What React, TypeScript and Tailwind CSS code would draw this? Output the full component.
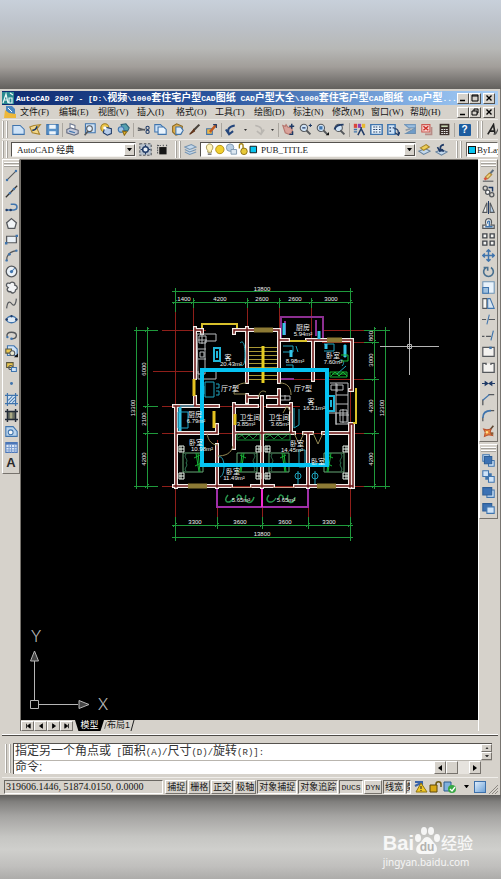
import type { ReactNode } from "react";

interface Tool {
  name: string;
  icon: ReactNode;
}

const BLUE = "#3f74ad";
const NAVY = "#1f3a66";
const PALE = "#cfe3f7";
const GRAY = "#55585c";
const GOLD = "#e8b830";

function Mixed({ text, latin }: { text: string; latin: string }) {
  const runs = text.match(/[\u3000-\u9fff]+|[^\u3000-\u9fff]+/g) ?? [];
  return (
    <>
      {runs.map((run, i) =>
        /[\u3000-\u9fff]/.test(run) ? (
          <span key={i}>{run}</span>
        ) : (
          <span key={i} className={latin}>
            {run}
          </span>
        )
      )}
    </>
  );
}

function Icon({ children }: { children: ReactNode }) {
  return (
    <svg viewBox="0 0 16 16" className="h-[13px] w-[13px] shrink-0" fill="none" strokeWidth="1.3">
      {children}
    </svg>
  );
}

const fileTools: Tool[] = [
  { name: "新建", icon: <path d="M1 3h9l5 5v6H1z" fill={PALE} stroke={BLUE} /> },
  {
    name: "打开",
    icon: (
      <>
        <path d="M1 5l5-2 8-1-4 5 3 7-9-2z" fill="#f3d88a" stroke="#a8832c" />
        <path d="M4 9c3 0 5-2 6-5" stroke={NAVY} strokeWidth="2" />
      </>
    ),
  },
  {
    name: "保存",
    icon: (
      <>
        <path d="M1 2h14v12H1z" fill="#5a93c9" stroke={BLUE} />
        <path d="M4 2h8v5H4zM4 10h8v4H4z" fill="#eef5fb" />
      </>
    ),
  },
];

const printTools: Tool[] = [
  {
    name: "打印",
    icon: (
      <>
        <path d="M5 7V1l6 2v5" fill="#fff" stroke="#6d7890" />
        <path d="M1 8l5-2 9 3v4l-5 2-9-3z" fill="#c5cada" stroke="#626a80" />
        <path d="M4 10l7 2" stroke={BLUE} />
      </>
    ),
  },
  {
    name: "打印预览",
    icon: (
      <>
        <path d="M3 1h12v11H3z" fill={PALE} stroke={BLUE} />
        <circle cx="8" cy="7" r="3.5" fill="#e5f2ff" stroke={GRAY} />
        <path d="M6 10l-4 5" stroke={GRAY} strokeWidth="2" />
      </>
    ),
  },
  {
    name: "发布",
    icon: (
      <>
        <circle cx="6" cy="6" r="5" fill="#efc94d" stroke="#9d7b1d" />
        <path d="M6 5l8 2v6l-5 2-5-3z" fill="#b7cdea" stroke={NAVY} />
        <circle cx="6" cy="6" r="2" fill="#fff" />
      </>
    ),
  },
  {
    name: "三维 DWF",
    icon: (
      <>
        <path d="M5 2l6-1 4 5-2 4-6-1z" fill="#55a0ae" stroke="#2d6278" />
        <circle cx="5" cy="8" r="3.5" fill="#9bc2e6" stroke={BLUE} />
        <path d="M7 10l5 1-3 4z" fill={GOLD} stroke="#8e6c13" />
      </>
    ),
  },
];

const editTools: Tool[] = [
  {
    name: "剪切",
    icon: (
      <>
        <path d="M1 9l9-1M1 6l9 3" stroke={GRAY} strokeWidth="1.8" />
        <circle cx="13" cy="6" r="2" stroke={NAVY} />
        <circle cx="13" cy="11" r="2" stroke={NAVY} />
      </>
    ),
  },
  {
    name: "复制",
    icon: (
      <>
        <path d="M1 2h7l3 3v6H1z" fill={PALE} stroke={BLUE} />
        <path d="M5 5h7l3 3v6H5z" fill="#e9f3fc" stroke={BLUE} />
      </>
    ),
  },
  {
    name: "粘贴",
    icon: (
      <>
        <path d="M2 4l5-3 7 3-1 9-7 2-4-4z" fill="#dfae4d" stroke="#8d6a23" />
        <path d="M6 5h6l3 4-3 5H6z" fill="#dcebf8" stroke={BLUE} />
      </>
    ),
  },
  {
    name: "特性匹配",
    icon: (
      <>
        <path d="M14 2L7 9" stroke="#47413a" strokeWidth="2.6" />
        <path d="M7 8l-5 6 6-4z" fill="#8a4b28" stroke="#5d3219" />
      </>
    ),
  },
  {
    name: "块编辑器",
    icon: (
      <>
        <path d="M2 7h7v7H2z" fill="#e9b64c" stroke={BLUE} />
        <path d="M14 2L6 11" stroke="#c05a20" strokeWidth="3" />
        <path d="M10 2h4v4" stroke={NAVY} />
      </>
    ),
  },
];

const undoIcon = <path d="M5 14C2 8 5 4 12 3M1 8l4 6 5-4" stroke="#24467c" strokeWidth="2.4" />;
const redoIcon = <path d="M11 14c3-6 0-10-7-11M15 8l-4 6-5-4" stroke="#b9b6b1" strokeWidth="2" />;

const zoomTools: Tool[] = [
  {
    name: "实时平移",
    icon: (
      <>
        <path d="M1 3l3 1 1-2 2 3 5 1 1 5-4 3-5-2z" fill="#d9a29a" stroke="#b5766e" />
        <path d="M12 1v6M9 4h6M13 10v4H9" stroke={NAVY} strokeWidth="1.8" />
      </>
    ),
  },
  {
    name: "实时缩放",
    icon: (
      <>
        <circle cx="6" cy="6" r="4.5" fill={PALE} stroke={GRAY} />
        <path d="M9 9l5 5" stroke={GRAY} strokeWidth="2.4" />
        <path d="M12 3h4M14 1v4M4 6h4" stroke={NAVY} />
      </>
    ),
  },
  {
    name: "窗口缩放",
    icon: (
      <>
        <circle cx="6" cy="6" r="4.5" fill={PALE} stroke={GRAY} />
        <path d="M9 9l5 5" stroke={GRAY} strokeWidth="2.4" />
        <path d="M4 4h4v4H4z" fill={BLUE} />
        <path d="M12 15h4v-4z" fill="#111" />
      </>
    ),
  },
  {
    name: "缩放上一个",
    icon: (
      <>
        <circle cx="7" cy="6" r="4.5" fill={PALE} stroke={GRAY} />
        <path d="M9 9l5 5" stroke={GRAY} strokeWidth="2.4" />
        <path d="M2 8C3 3 8 2 13 2" stroke={NAVY} strokeWidth="2.4" />
      </>
    ),
  },
];

const paletteTools: Tool[] = [
  {
    name: "特性",
    icon: (
      <>
        <path d="M1 1h4v5H1z" fill="#d9463c" />
        <path d="M6 1h4v5H6z" fill="#8e3fb0" />
        <path d="M11 1h4v5h-4z" fill={GOLD} />
        <path d="M1 8h4M1 11h4" stroke={BLUE} strokeWidth="1.600" />
        <path d="M6 15l4-8 4 8M10 8V5" stroke={NAVY} strokeWidth="1.8" />
      </>
    ),
  },
  {
    name: "设计中心",
    icon: (
      <>
        <path d="M1 2h14v12H1z" fill="#e8f2fb" stroke={BLUE} strokeWidth="1.8" />
        <path d="M4 5h2M7 5h2M11 5h2M4 8h2M7 8h2M11 8h2M4 11h2M7 11h2M11 11h2" stroke={NAVY} />
      </>
    ),
  },
  {
    name: "工具选项板",
    icon: (
      <>
        <path d="M1 2h9v12H1z" fill={PALE} stroke={BLUE} strokeWidth="1.8" />
        <path d="M3 6h2M7 6h2M3 10h2" stroke={NAVY} />
        <path d="M9 7c5 0 5 3 5 7M10 12l4 3 2-4" stroke={NAVY} strokeWidth="1.6" />
      </>
    ),
  },
  {
    name: "图纸集管理器",
    icon: (
      <>
        <path d="M1 2h13v4H6z" fill="#9cc0e2" stroke="#7397bb" />
        <path d="M14 6L2 13h12z" fill="#6f9cc8" stroke="#6d8fb0" />
        <path d="M2 9l6-2" stroke="#8d9aa6" strokeWidth="2" />
      </>
    ),
  },
  {
    name: "标记集管理器",
    icon: (
      <>
        <path d="M1 2h10v9H1z" fill="#f6d6d2" stroke="#cc5750" />
        <path d="M3 4l6 5M9 4l-6 5" stroke="#d02e28" strokeWidth="1.8" />
        <path d="M13 5v9H5" stroke="#b78b86" strokeWidth="2" />
      </>
    ),
  },
  {
    name: "快速计算器",
    icon: (
      <>
        <path d="M2 1h12v14H2z" fill="#3c2f2a" />
        <path d="M4 3h8v2H4z" fill="#c8d6b2" />
        <path d="M4 8h2M7 8h2M10 8h2M4 10.500h2M7 10.500h2M10 10.500h2M4 13h2M7 13h2M10 13h2" stroke="#eee" />
      </>
    ),
  },
];

const drawTools: Tool[] = [
  {
    name: "直线",
    icon: (
      <>
        <path d="M2 14L14 2" stroke={GRAY} />
        <circle cx="2.500" cy="13.500" r="1.500" fill={BLUE} />
        <circle cx="13.500" cy="2.500" r="1.500" fill={BLUE} />
      </>
    ),
  },
  {
    name: "构造线",
    icon: (
      <>
        <path d="M1 15L15 1" stroke="#333" strokeWidth="1.600" />
        <circle cx="6" cy="10" r="1.500" fill={BLUE} />
        <circle cx="11" cy="5" r="1.500" fill={BLUE} />
      </>
    ),
  },
  {
    name: "多段线",
    icon: (
      <>
        <path d="M7 4h4c5 0 5 7 0 7H2" stroke={BLUE} strokeWidth="1.800" />
        <circle cx="2" cy="11" r="1.500" fill={NAVY} />
        <circle cx="7" cy="11" r="1.500" fill={NAVY} />
      </>
    ),
  },
  { name: "正多边形", icon: <path d="M8 2l6 5-2 7H4L2 7z" fill="#f1f4f6" stroke={GRAY} strokeWidth="1.600" /> },
  {
    name: "矩形",
    icon: (
      <>
        <path d="M2 4h12v8H2z" fill="#e9f0f6" stroke={GRAY} strokeWidth="1.500" />
        <path d="M0 11h3v3H0zM13 2h3v3h-3z" fill={BLUE} />
      </>
    ),
  },
  {
    name: "圆弧",
    icon: (
      <>
        <path d="M2 14C2 7 7 3 14 2" stroke={GRAY} strokeWidth="1.500" />
        <circle cx="2" cy="14" r="1.500" fill={BLUE} />
        <circle cx="5.500" cy="6.500" r="1.700" fill={BLUE} />
        <circle cx="14" cy="2" r="1.500" fill={BLUE} />
      </>
    ),
  },
  {
    name: "圆",
    icon: (
      <>
        <circle cx="8" cy="8" r="6.500" fill="#e9f0f6" stroke={GRAY} strokeWidth="1.600" />
        <path d="M8 8l4-4" stroke={BLUE} />
        <circle cx="8" cy="8" r="2" fill={BLUE} />
      </>
    ),
  },
  {
    name: "修订云线",
    icon: (
      <path
        d="M4 8C0 6 2 1 6 3c2-3 7-1 6 2 4 1 4 5 1 6 0 4-5 5-6 2-3 1-6-2-3-5z"
        fill="#f2f4f6"
        stroke={GRAY}
        strokeWidth="1.600"
      />
    ),
  },
  { name: "样条曲线", icon: <path d="M2 14C3 5 6 5 8 8s5 4 6-6" stroke={GRAY} strokeWidth="1.500" /> },
  {
    name: "椭圆",
    icon: (
      <>
        <ellipse cx="8" cy="8" rx="6" ry="4" fill="#dfeaf5" stroke={BLUE} strokeWidth="1.600" />
        <circle cx="2" cy="8" r="1.600" fill={NAVY} />
        <circle cx="14" cy="8" r="1.600" fill={NAVY} />
        <circle cx="8" cy="4" r="1.400" fill={NAVY} />
      </>
    ),
  },
  {
    name: "椭圆弧",
    icon: (
      <>
        <path d="M3 10C1 6 4 4 8 4c8 0 8 8 0 8" stroke={GRAY} strokeWidth="1.700" />
        <circle cx="8" cy="12" r="1.600" fill={BLUE} />
        <circle cx="3" cy="10" r="1.400" fill={BLUE} />
      </>
    ),
  },
  {
    name: "插入块",
    icon: (
      <>
        <path d="M3 1h8l4 4v8H3z" fill={PALE} stroke={BLUE} />
        <path d="M1 5h7v5H1z" fill="#ecc951" stroke="#59553c" />
        <circle cx="9" cy="10" r="3" fill="#e8e7d0" stroke={GRAY} />
        <path d="M11 15h5v-5z" fill="#111" />
      </>
    ),
  },
  {
    name: "创建块",
    icon: (
      <>
        <path d="M2 2h8v6H2z" fill="#ecc951" stroke="#59553c" />
        <circle cx="7" cy="8" r="2.500" stroke={GRAY} />
        <path d="M8 8h6v5H8z" fill={PALE} stroke={BLUE} />
      </>
    ),
  },
  { name: "点", icon: <circle cx="8" cy="8" r="1.800" fill={BLUE} /> },
  {
    name: "图案填充",
    icon: (
      <>
        <path d="M3 3h10v10H3z" fill="#d4e5f5" />
        <path d="M3 0v16M13 0v16M0 3h16M0 13h16" stroke={BLUE} strokeWidth="1.500" />
        <path d="M4 9l5-5M5 12l7-7M9 12l3-3" stroke={BLUE} />
      </>
    ),
  },
  {
    name: "渐变色",
    icon: (
      <>
        <path d="M3 3h10v10H3z" fill="#686d61" />
        <path d="M6 4h3v8H6z" fill="#a8a883" />
        <path d="M3 0v16M13 0v16M0 3h16M0 13h16" stroke="#222b38" strokeWidth="1.800" />
      </>
    ),
  },
  {
    name: "面域",
    icon: (
      <>
        <path d="M1 2h9l5 6v6H1z" fill="#b9d3ec" stroke={BLUE} />
        <circle cx="7" cy="9" r="3" fill="#f4f8fb" stroke={BLUE} />
      </>
    ),
  },
  {
    name: "表格",
    icon: (
      <>
        <path d="M1 2h14v12H1z" fill="#dfeaf8" stroke="#4b76b8" />
        <path d="M1 3h14" stroke="#4b76b8" strokeWidth="3" />
        <path d="M1 8h14M1 11h14M5 4v10M8 4v10M12 4v10" stroke="#7b9dd0" />
      </>
    ),
  },
];

const modifyTools: Tool[] = [
  {
    name: "删除",
    icon: (
      <>
        <path d="M14 1L9 7" stroke="#5c6f80" strokeWidth="2.500" />
        <path d="M9 5L4 10l3 2 5-5z" fill="#f0cf7c" stroke="#b08a3a" />
        <path d="M4 10l-2 2 2 2 3-2z" fill="#d9503c" />
        <path d="M1 15h13" stroke={GRAY} />
      </>
    ),
  },
  {
    name: "复制对象",
    icon: (
      <>
        <circle cx="4" cy="4" r="2.600" stroke={GRAY} strokeWidth="1.600" />
        <circle cx="7" cy="9" r="2.600" fill="#fff" stroke={GRAY} strokeWidth="1.600" />
        <circle cx="12" cy="12" r="2.600" stroke={GRAY} strokeWidth="1.600" />
        <path d="M8 3h5v5" stroke={NAVY} strokeWidth="1.800" />
      </>
    ),
  },
  {
    name: "镜像",
    icon: (
      <>
        <path d="M6 2v12H1z" fill="#f2f2f0" stroke={GRAY} />
        <path d="M10 2v12h5z" fill="#b7cfe6" stroke={GRAY} />
        <path d="M8 0v16" stroke={NAVY} />
      </>
    ),
  },
  {
    name: "偏移",
    icon: (
      <>
        <path d="M1 14v-4h4C3 5 5 2 8 2s5 3 3 8h4v4z" fill="#e9eef2" stroke={GRAY} strokeWidth="1.500" />
        <path d="M4 12h9M7 8c-1-4 4-4 2 0v4" stroke={BLUE} strokeWidth="1.600" />
      </>
    ),
  },
  {
    name: "阵列",
    icon: <path d="M1 1h5v5H1zM10 1h5v5h-5zM1 10h5v5H1zM10 10h5v5h-5z" fill="#f4f4f2" stroke="#40444a" strokeWidth="1.600" />,
  },
  {
    name: "移动",
    icon: (
      <path
        d="M8 1v14M1 8h14M5.500 3.500L8 1l2.500 2.500M5.500 12.500L8 15l2.500-2.500M3.500 5.500L1 8l2.500 2.500M12.500 5.500L15 8l-2.500 2.500"
        stroke={BLUE}
        strokeWidth="1.800"
      />
    ),
  },
  { name: "旋转", icon: <path d="M5 3a6 6 0 1 0 6 0M2 3h5v4" stroke="#49708f" strokeWidth="2" /> },
  {
    name: "缩放",
    icon: (
      <>
        <path d="M1 1h14v14H1z" fill="#e9f2fa" stroke="#6f94b5" />
        <path d="M1 8h7v7H1z" fill="#9fc0de" stroke={BLUE} />
      </>
    ),
  },
  {
    name: "拉伸",
    icon: (
      <>
        <path d="M1 2h5v12H1z" fill="#f7f7f5" stroke={GRAY} />
        <path d="M7 2h3l5 12H7z" fill="#d7e5f2" stroke={BLUE} />
      </>
    ),
  },
  {
    name: "修剪",
    icon: (
      <>
        <path d="M0 8h5M8 8h8" stroke={GRAY} strokeWidth="1.500" />
        <path d="M9 2L6 14" stroke={BLUE} />
      </>
    ),
  },
  {
    name: "延伸",
    icon: (
      <>
        <path d="M0 9h3M5 9h6" stroke={GRAY} strokeWidth="1.500" />
        <path d="M14 2l-3 12" stroke={BLUE} strokeWidth="1.500" />
      </>
    ),
  },
  {
    name: "打断于点",
    icon: (
      <>
        <path d="M1 3h14v11H1z" fill="#f4f2ef" stroke={GRAY} strokeWidth="1.500" />
        <path d="M9 2h3v3H9z" fill={BLUE} />
      </>
    ),
  },
  { name: "打断", icon: <path d="M5 3H1v11h14V3h-4M5 2v3M11 2v3" fill="#f4f2ef" stroke={GRAY} strokeWidth="1.600" /> },
  { name: "合并", icon: <path d="M0 8h6M16 8h-6M4 6l3 2-3 2zM12 6L9 8l3 2z" fill={NAVY} stroke={NAVY} strokeWidth="1.500" /> },
  {
    name: "倒角",
    icon: (
      <>
        <path d="M1 15V8M8 2h7" stroke={GRAY} strokeWidth="1.600" />
        <path d="M1 9l8-7" stroke={BLUE} strokeWidth="1.600" />
      </>
    ),
  },
  {
    name: "圆角",
    icon: (
      <>
        <path d="M1 15v-5M10 2h5" stroke={GRAY} strokeWidth="1.600" />
        <path d="M1 11c0-6 4-9 10-9" stroke={BLUE} strokeWidth="2" />
      </>
    ),
  },
  {
    name: "分解",
    icon: (
      <>
        <path d="M14 1L9 7" stroke="#5c4733" strokeWidth="2" />
        <path d="M2 5l4 1 5-1-1 4 3 4-5-1-5 2 1-5z" fill="#e9813a" stroke="#b8522e" />
        <path d="M11 9h3v3h-3z" fill="#8a5a34" />
        <circle cx="6" cy="9" r="1.500" fill="#ffe28a" />
      </>
    ),
  },
];

const orderTools: Tool[] = [
  {
    name: "前置",
    icon: (
      <>
        <path d="M1 1h8v8H1zM8 8h7v7H8z" fill={PALE} stroke={BLUE} />
        <path d="M3 3h9v9H3z" fill="#3c72b4" stroke="#2c5d96" />
      </>
    ),
  },
  {
    name: "后置",
    icon: (
      <>
        <path d="M4 4h8v8H4z" fill={BLUE} />
        <path d="M1 1h7v7H1zM8 8h7v7H8z" fill={PALE} stroke={BLUE} />
      </>
    ),
  },
  {
    name: "置于对象之上",
    icon: (
      <>
        <path d="M6 5h9v9H6z" fill={PALE} stroke={BLUE} />
        <path d="M1 2h11v9H1z" fill="#3c72b4" stroke="#2c5d96" />
      </>
    ),
  },
  {
    name: "置于对象之下",
    icon: (
      <>
        <path d="M1 2h11v9H1z" fill="#3c72b4" stroke="#2c5d96" />
        <path d="M6 6h9v8H6z" fill={PALE} stroke={BLUE} />
      </>
    ),
  },
];

const layersIcon = <path d="M1 5l8-3 6 3-8 3zM1 8l6 3 8-3M1 11l6 3 8-3" fill="#c3d8ec" stroke="#7795b2" />;

function HGrip() {
  return (
    <div className="flex w-[6px] shrink-0 justify-between self-stretch py-[1px]">
      <i className="w-[2px] border-l border-white bg-[#a5a29c]" />
      <i className="w-[2px] border-l border-white bg-[#a5a29c]" />
    </div>
  );
}

function VGrip() {
  return (
    <div className="flex h-[5px] w-[15px] shrink-0 flex-col justify-between">
      <i className="h-[2px] border-t border-white bg-[#a5a29c]" />
      <i className="h-[2px] border-t border-white bg-[#a5a29c]" />
    </div>
  );
}

function Divider() {
  return <div className="mx-[1px] h-[14px] w-[1px] shrink-0 bg-[#aaa69f]" />;
}

function Tools({ items }: { items: Tool[] }) {
  return (
    <>
      {items.map((t) => (
        <button key={t.name} aria-label={t.name} className="flex h-4 w-[17px] shrink-0 items-center justify-center">
          <Icon>{t.icon}</Icon>
        </button>
      ))}
    </>
  );
}

function DropArrow({ name }: { name: string }) {
  return (
    <button aria-label={name} className="flex h-4 w-[10px] shrink-0 items-center justify-center">
      <svg viewBox="0 0 6 4" className="w-[3px]">
        <path d="M0 0h6L3 4z" fill="#333" />
      </svg>
    </button>
  );
}

function Combo({ label, value, lead, className }: { label: string; value: string; lead?: ReactNode; className: string }) {
  return (
    <div className={`flex h-[15px] items-center border border-t-[#55524e] border-l-[#55524e] border-r-[#f5f3f0] border-b-[#f5f3f0] bg-white ${className}`}>
      {lead}
      <select
        aria-label={label}
        className="min-w-0 flex-1 appearance-none bg-white font-['Liberation_Serif','Noto_Sans_CJK_SC',serif] text-[9px] leading-3 text-[#151515] outline-none"
      >
        <option>{value}</option>
      </select>
      <span className="pointer-events-none flex h-[12px] w-[11px] shrink-0 items-center justify-center border border-t-white border-l-white border-r-[#55524e] border-b-[#55524e] bg-[#d6d2cb]">
        <svg viewBox="0 0 6 4" className="w-[5px]">
          <path d="M0 0h6L3 4z" fill="#000" />
        </svg>
      </span>
    </div>
  );
}

function WindowButtons({ restore }: { restore?: boolean }) {
  const box =
    "flex h-[11px] w-[12px] items-center justify-center border border-t-white border-l-white border-r-[#55524e] border-b-[#55524e] bg-[#d6d2cb]";
  return (
    <div className="flex shrink-0 items-center">
      <button aria-label="最小化" className={box}>
        <svg viewBox="0 0 8 8" className="w-2">
          <path d="M1 6.500h5" stroke="#000" strokeWidth="1.500" />
        </svg>
      </button>
      <button aria-label={restore ? "还原" : "最大化"} className={box}>
        <svg viewBox="0 0 8 8" className="w-2" fill="none" stroke="#000">
          <path d={restore ? "M3 1h4v4H6M3 1v2M1 3h5v4H1z" : "M1 1h6v6H1zM1 2h6"} />
        </svg>
      </button>
      <button aria-label="关闭" className={`${box} ml-[2px]`}>
        <svg viewBox="0 0 8 8" className="w-2">
          <path d="M1.500 1.500l5 5M6.500 1.500l-5 5" stroke="#000" strokeWidth="1.400" />
        </svg>
      </button>
    </div>
  );
}

const menus = ["文件(F)", "编辑(E)", "视图(V)", "插入(I)", "格式(O)", "工具(T)", "绘图(D)", "标注(N)", "修改(M)", "窗口(W)", "帮助(H)"];

const topTicks = [175, 193, 247, 279, 311, 350];
const bottomTicks = [175, 217, 262, 308, 350];
const leftTicks = [330, 406, 433, 486];
const rightTicks = [330, 342, 379, 433, 486];

const dims: [number, number, string][] = [
  [262, 291, "13800"],
  [184, 301, "1400"],
  [220, 301, "4200"],
  [262, 301, "2600"],
  [295, 301, "2600"],
  [331, 301, "3000"],
  [195, 524, "3300"],
  [240, 524, "3600"],
  [285, 524, "3600"],
  [329, 524, "3300"],
  [262, 536, "13800"],
];

const sideDims: [number, number, string][] = [
  [146, 369, "6000"],
  [135, 408, "13300"],
  [146, 419, "2100"],
  [146, 459, "4200"],
  [373, 336, "800"],
  [373, 360, "3000"],
  [373, 406, "4200"],
  [373, 459, "4200"],
  [384, 408, "12300"],
];

const rooms: [number, number, string][] = [
  [228, 360, "客"],
  [230, 391, "厅7型"],
  [303, 330, "厨房"],
  [333, 358, "卧室"],
  [303, 391, "厅7型"],
  [311, 404, "客"],
  [195, 417, "厨房"],
  [250, 420, "卫生间"],
  [279, 420, "卫生间"],
  [196, 445, "卧室"],
  [233, 474, "卧室"],
  [297, 446, "卧室"],
  [318, 464, "卧室"],
];

const areas: [number, number, string][] = [
  [231, 366, "20.43m²"],
  [303, 336, "5.94m²"],
  [295, 363, "8.98m²"],
  [333, 364, "7.60m²"],
  [314, 410, "16.21m²"],
  [196, 423, "6.79m²"],
  [246, 426, "3.85m²"],
  [280, 426, "3.65m²"],
  [202, 451, "10.98m²"],
  [234, 480, "11.49m²"],
  [292, 452, "14.45m²"],
  [241, 502, "5.65m²"],
  [286, 502, "5.65m²"],
];

const walls =
  "M195 330H202V333M234 333V330H249M247 328V382M247 395V402M249 330H254M273 330H279V382M195 328V378M195 397V406M174 406H218M176 406V487" +
  "M234 406H257M268 406H290M247 397H257M268 397H279M176 433H217V425M234 404V448M262 397V487M291 404V433M279 390V406" +
  "M236 433H262M262 433H294M217 445V487M308 433V487M304 433H312M323 433H350M350 424V487M350 424H353V487" +
  "M174 486H188M207 486H231M252 486H273M295 486H317M336 486H353" +
  "M279 340H288M307 340H327M342 340H352V390H350M313 340V380";

function Bed({ x, y, flip }: { x: number; y: number; flip?: boolean }) {
  return (
    <g transform={flip ? `translate(${x + 30} ${y}) scale(-1 1)` : `translate(${x} ${y})`} fill="none" strokeWidth="1">
      <path d="M5 7h20v19H5z" stroke="#66a877" />
      <path d="M18 7l3 19M20 7l2 19M16 12l6-3M17 20l6-3" stroke="#16b335" />
      <path d="M8 8c-3 4 3 5 0 9 3 3-3 5 0 8" stroke="#2f7a55" />
      <path d="M1 0h5v6H1zM1 27h5v6H1zM3 0v6M1 3h5M3 27v6M1 30h5" stroke="#e9f4ea" />
    </g>
  );
}

function Drawing() {
  return (
    <svg viewBox="21 160 457 560" className="block h-auto w-full bg-black" fill="none" role="img" aria-label="户型图">
      {/* axes */}
      <g stroke="#8f1f1a">
        {topTicks.map((x) => (
          <path key={x} d={`M${x}.500 306V342`} />
        ))}
        {bottomTicks.map((x) => (
          <path key={x} d={`M${x}.500 440V518`} />
        ))}
        <path d="M175.500 340V440M350.500 340V440M162 330.500H206M153 371.500H195M162 406.500H300M162 433.500H364M162 486.500H364M322 330.500H364M322 342.500H364M290 379.500H364" />
      </g>

      {/* dimension lines */}
      <g stroke="#1f9a3c">
        <path d="M172 291.500H353M172 302.500H353M172 525.500H353M172 537.500H353" />
        <path d="M136.500 327V489M147.500 327V489M374.500 327V489M385.500 327V489" />
        <path d="M134 330.500H158M134 486.500H158M364 330.500H390M364 486.500H390" />
        <path d="M175.500 288V312M350.500 288V350M175.500 518V541M350.500 518V541" />
        {topTicks.map((x) => (
          <path key={x} d={`M${x}.500 298V308M${x - 2} 304l4-4`} />
        ))}
        {bottomTicks.map((x) => (
          <path key={x} d={`M${x}.500 517V529M${x - 2} 527l4-4`} />
        ))}
        {leftTicks.map((y) => (
          <path key={y} d={`M143 ${y}.500H158M145 ${y + 2}l4-4`} />
        ))}
        {rightTicks.map((y) => (
          <path key={y} d={`M364 ${y}.500H379M372 ${y + 2}l4-4`} />
        ))}
      </g>

      {/* balconies and kitchen bay */}
      <path d="M281 342V317H323V340M285 321V335M316 320V336M279 379H294" stroke="#8c2f91" strokeWidth="2" />
      <path d="M217 489V507H308V489" stroke="#a02fa8" strokeWidth="2" />
      <path d="M262 488V507" stroke="#f22bd0" strokeWidth="2" />

      {/* stairs */}
      <g stroke="#a99735">
        <path d="M249 347.500H278M249 351.500H278M249 355.500H278M249 359.500H278M249 363.500H278M249 367.500H278M249 371.500H278M249 375.500H278M249 379.500H278" />
        <path d="M263 346V383" stroke="#e4cc22" strokeWidth="3" />
      </g>

      {/* walls: white faces round a dark core */}
      <path d={walls} stroke="#f3eeea" strokeWidth="4" strokeLinecap="square" />
      <path d={walls} stroke="#6b1514" strokeWidth="1.500" strokeLinecap="square" />

      {/* windows and doors */}
      <path d="M254 330H273M188 486H207M317 486H336M327 340H342" stroke="#8d7a35" strokeWidth="5" />
      <path d="M202 328V324H237V328M356 388V423H353M290 341H307" stroke="#d8c02b" strokeWidth="2" />
      <path d="M194 379V396M214 411V428M235 414V425" stroke="#e5c321" strokeWidth="3" />
      <path d="M231 487.500H252M273 487.500H295" stroke="#c9a08c" />
      <path
        d="M246 383c-8 0-12 5-12 11h12M207 433c1 8 5 12 11 12M217 456c8 0 14-2 16-10M259 397c0-6 4-7 7-5M280 383c7 0 11 4 11 12M294 433l5 11 5-11M313 433l5 11 5-11M283 413l4-7 4 7"
        stroke="#958a55"
      />

      {/* kitchens, wardrobes, seating */}
      <g stroke="#b9bcbe">
        <path d="M197 334h19v7h-11v33h-7zM198 349h8M198 359h8M205 371h11v8H198v-8M330 383h18v41h-12v-41M336 395h12M336 404h12M336 413h12M329 413h7v12" />
        <path d="M199 336h7v7h-7zM202 334v10M198 340h9M200 352h4v5h-4zM340 410h7v12h-7zM343 409v14M339 415h10M331 385h12v5h-12zM337 384v8M281 396h9v4h-9M285 395v5" />
      </g>
      <g stroke="#1ea3bd">
        <path d="M240 343c4-4 5 4 5 12s-1 12-5 10M205 382h9v15h-9zM200 386h4v8h-4M216 384h3v4h-3M216 391h3v4h-3" />
        <path d="M283 346h10v6h-10M286 365h7v4h-7M296 346l2 6M324 344h10v7h-10M345 344v14M338 362c4-5 8 0 4 4M337 374l9-8" />
        <path d="M294 408v20l5-3v-16M299 450h6v17h-6zM219 457c6-2 7 18 1 20" />
        <circle cx="298" cy="476" r="3" />
        <circle cx="315" cy="476" r="3" />
        <path d="M298 471v13M315 471v13" />
      </g>
      <path d="M214 348h6v13h-6zM328 396h6v15h-6zM217 351v7M331 400v7" stroke="#20b5d8" strokeWidth="2" />
      <path d="M284 323v12M319 331v8M291 350v7M180 407v24M326 344v5M345 345v12" stroke="#35c5e8" strokeWidth="3" />
      <path d="M178 412h10v16h-10zM180 406h14" stroke="#20a8ca" />

      {/* wardrobes and plants */}
      <path
        d="M237 434h23v6h-23zM265 434h25v6h-25zM238 438l4-3 3 4 4-4 4 4 4-4M266 438l4-3 4 4 4-4 4 4 5-4"
        stroke="#148d34"
      />
      <path d="M330 372h17v5h-17zM331 376l4-4 4 4 4-4 4 4M332 374h14M341 355h7v6h-7" stroke="#17b834" />
      <path
        d="M228 495c-6 7 1 10 6 3M237 498c0-5 5-3 4 1M246 495c-3 8 6 11 8 2M269 495c-6 7 3 10 7 3M279 498c0-5 5-3 4 1M288 495c-3 8 6 11 7 2"
        stroke="#27964b"
        strokeWidth="1.500"
      />
      <Bed x={178} y={446} />
      <Bed x={232} y={446} flip />
      <Bed x={264} y={446} />
      <Bed x={319} y={446} flip />

      <path d="M202 370H327V465H202z" stroke="#05c3f2" strokeWidth="4" />

      <g fill="#f1f1f1" textAnchor="middle" className="font-['Liberation_Sans','Noto_Sans_CJK_SC',sans-serif] text-[6px]">
        {dims.map(([x, y, t]) => (
          <text key={`${x}-${y}`} x={x} y={y}>
            {t}
          </text>
        ))}
        {sideDims.map(([x, y, t]) => (
          <text key={`${x}-${y}`} transform={`translate(${x} ${y}) rotate(-90)`}>
            {t}
          </text>
        ))}
        {areas.map(([x, y, t]) => (
          <text key={`${x}-${y}`} x={x} y={y}>
            {t}
          </text>
        ))}
      </g>
      <g fill="#f1f1f1" textAnchor="middle" className="font-['Liberation_Sans','Noto_Sans_CJK_SC',sans-serif] text-[7px]">
        {rooms.map(([x, y, t]) => (
          <text key={`${x}-${y}`} x={x} y={y}>
            {t}
          </text>
        ))}
      </g>

      {/* crosshair */}
      <path d="M380 346.500H439M409.500 318V375M407.500 344.500h4v4h-4z" stroke="#b5b5b5" />

      {/* UCS marker */}
      <g stroke="#b5b5b5">
        <path d="M30.500 700.500h8v8h-8zM34.500 700V661M39 704.500H78" />
        <path d="M34.500 651l-4 10h8zM89 704.500l-10-4v8z" fill="#444" />
      </g>
      <g fill="#b5b5b5" textAnchor="middle" className="font-['Inter',sans-serif] text-[16px] font-light">
        <text x="36" y="642">Y</text>
        <text x="103" y="710">X</text>
      </g>
    </svg>
  );
}

const modes = [
  { name: "捕捉", on: false },
  { name: "栅格", on: false },
  { name: "正交", on: false },
  { name: "极轴", on: false },
  { name: "对象捕捉", on: true },
  { name: "对象追踪", on: true },
  { name: "DUCS", on: true },
  { name: "DYN", on: false },
  { name: "线宽", on: true },
];

const layoutButtons = [
  { name: "第一个布局", d: "M2 1v6M7 1L3 4l4 3z" },
  { name: "上一个布局", d: "M6 1L2 4l4 3z" },
  { name: "下一个布局", d: "M2 1l4 3-4 3z" },
  { name: "最后一个布局", d: "M6 1v6M1 1l4 3-4 3z" },
];

const raised = "border border-t-white border-l-white border-r-[#77736d] border-b-[#77736d]";
const sunken = "border border-t-[#6b6863] border-l-[#6b6863] border-r-white border-b-white";

export default function App() {
  return (
    <div className="w-full bg-[#cdcdcb] font-['Liberation_Sans','Noto_Sans_CJK_SC',sans-serif] text-[#151515]">
      <div className="h-[89px] bg-[linear-gradient(to_bottom,#c8d0da_0%,#bcc1c8_30%,#b7b8b6_55%,#a29e9a_75%,#7b7875_90%,#62605d_100%)]" />

      <main className="border-r border-[#77746f] bg-[#d6d2cb] px-[2px] pt-[2px]">
        <header className="flex h-[14px] items-center bg-[linear-gradient(to_right,#0d2a70,#2c57a0_45%,#88b5e8_85%,#a8cdf3)] pr-[3px]">
          <svg viewBox="0 0 12 12" className="h-3 w-3 shrink-0">
            <path d="M0 0h12v12H0z" fill="#2a8a90" />
            <path d="M1 11l3-9 2 9M2 8h3M7 11V6h3v5zM8 1l3 2" fill="none" stroke="#e9f7f7" strokeWidth="1.200" />
          </svg>
          <h1 className="min-w-0 flex-1 overflow-hidden pl-[2px] text-[10px] leading-[14px] font-bold whitespace-pre text-white">
            <Mixed
              text="AutoCAD 2007 - [D:\视频\1000套住宅户型CAD图纸 CAD户型大全\1000套住宅户型CAD图纸 CAD户型..."
              latin="font-['Liberation_Mono',monospace] text-[8px]"
            />
          </h1>
          <WindowButtons />
        </header>

        <nav className="flex h-[14px] items-center pr-[3px]">
          <svg viewBox="0 0 12 12" className="mr-[4px] ml-[2px] h-3 w-3 shrink-0">
            <path d="M2 0h6l3 3v6H2z" fill="#4a86c0" />
            <path d="M1 4l4 3 7 1v4H0z" fill="#edb83a" />
            <path d="M4 2l4 4" stroke="#fff" />
          </svg>
          {menus.map((m) => (
            <button key={m} className="w-[39px] shrink-0 text-left text-[9px] leading-3 whitespace-nowrap">
              <Mixed text={m} latin="font-['Liberation_Serif',serif] text-[9px]" />
            </button>
          ))}
          <div className="flex-1" />
          <WindowButtons restore />
        </nav>

        <div className="flex h-[20px] items-center overflow-hidden border-t border-[#efede9]">
          <HGrip />
          <div className="w-[2px] shrink-0" />
          <Tools items={fileTools} />
          <Divider />
          <Tools items={printTools} />
          <Divider />
          <Tools items={editTools} />
          <Divider />
          <Tools items={[{ name: "放弃", icon: undoIcon }]} />
          <DropArrow name="放弃列表" />
          <Tools items={[{ name: "重做", icon: redoIcon }]} />
          <DropArrow name="重做列表" />
          <Divider />
          <Tools items={zoomTools} />
          <Divider />
          <Tools items={paletteTools} />
          <Divider />
          <button aria-label="帮助" className="flex h-4 w-[17px] shrink-0 items-center justify-center">
            <span className="h-3 w-3 rounded-[1px] bg-[#1d5c9f] text-center text-[10px] leading-3 font-bold text-white">?</span>
          </button>
          <div className="w-1 shrink-0" />
          <HGrip />
          <button aria-label="文字样式" className="ml-[3px] flex h-4 w-[15px] shrink-0 items-center justify-center">
            <Icon>
              <path d="M1 14L8 2l2 12M4 10h6" stroke="#222" strokeWidth="2" />
              <path d="M15 5l-4 8-3 1" stroke="#555" strokeWidth="1.500" />
            </Icon>
          </button>
        </div>

        <div className="flex h-[20px] items-center overflow-hidden border-t border-[#efede9]">
          <HGrip />
          <Combo label="工作空间" value="AutoCAD 经典" className="ml-[3px] w-[125px] shrink-0 pl-[5px]" />
          <button aria-label="工作空间设置" className="ml-[1px] flex h-4 w-[17px] shrink-0 items-center justify-center">
            <Icon>
              <path d="M1 1h14v14H1z" fill="#b9c2cc" stroke={GRAY} strokeDasharray="3 2" />
              <circle cx="8" cy="8" r="3.500" fill="#e8eef4" stroke={NAVY} strokeWidth="1.800" />
              <path d="M8 2v3M8 11v3M2 8h3M11 8h3" stroke={NAVY} />
            </Icon>
          </button>
          <button aria-label="我的工作空间" className="flex h-4 w-[17px] shrink-0 items-center justify-center">
            <Icon>
              <path d="M4 5h9v9H4z" fill="#161616" />
              <path d="M2 2v12M2 3h4M9 2v3M13 2v3" stroke={GRAY} strokeDasharray="2 1" />
            </Icon>
          </button>
          <div className="w-1 shrink-0" />
          <HGrip />
          <button aria-label="图层特性管理器" className="mx-[1px] flex h-4 w-[17px] shrink-0 items-center justify-center">
            <Icon>{layersIcon}</Icon>
          </button>
          <Combo
            label="图层"
            value="PUB_TITLE"
            className="min-w-0 flex-1"
            lead={
              <svg viewBox="0 0 60 14" className="h-[13px] w-[60px] shrink-0" fill="none">
                <path d="M5 8C2 5 4 1 7 1s5 4 2 7v2H5z" fill="#fff4b8" stroke="#9b8c4a" />
                <path d="M5 12h4" stroke="#666" strokeWidth="1.500" />
                <circle cx="18" cy="7" r="4.500" fill="#f2d02e" stroke="#b08d15" />
                <circle cx="29" cy="5" r="4" fill="#b9cfe4" stroke="#7d97b0" />
                <path d="M30 7h6v5h-6z" fill="#dce7f1" stroke="#7d97b0" />
                <path d="M39 6V3c0-3 4-3 4 0v4" stroke="#a38416" strokeWidth="1.500" />
                <circle cx="44" cy="9" r="3.500" fill="#e8c938" stroke="#8d7014" />
                <path d="M50.500 3.500h7v7h-7z" fill="#08c5f0" stroke="#111" />
              </svg>
            }
          />
          <Tools
            items={[
              {
                name: "将对象的图层置为当前",
                icon: (
                  <>
                    <path d="M1 10l8-3 6 3-8 4z" fill="#c3d8ec" stroke="#66819c" />
                    <path d="M3 6l7-4 4 3-7 4z" fill="#efcf57" stroke="#a58528" />
                  </>
                ),
              },
              {
                name: "上一个图层",
                icon: (
                  <>
                    <path d="M1 11l7-3 7 3-7 4z" fill="#c3d8ec" stroke="#66819c" />
                    <path d="M11 10C5 9 5 3 11 2M3 5l3 5 4-2" stroke={NAVY} strokeWidth="2" />
                  </>
                ),
              },
            ]}
          />
          <div className="w-[6px] shrink-0" />
          <HGrip />
          <div className={`ml-[4px] flex h-[15px] w-[32px] shrink-0 items-center gap-[1px] bg-white pl-[1px] ${sunken}`}>
            <i className="h-2 w-2 shrink-0 border border-[#111] bg-[#08c5f0]" />
            <span className="font-['Liberation_Serif',serif] text-[9px] leading-3">ByLay</span>
          </div>
        </div>

        <div className="flex">
          <aside className="flex w-[18px] shrink-0 flex-col items-start">
            <div className={`flex w-[18px] flex-col items-center pt-[2px] pb-[2px] ${raised}`}>
              <VGrip />
              <Tools items={drawTools} />
              <button aria-label="多行文字" className="h-4 w-4 text-center text-[13px] leading-4 font-bold text-[#2b2b2b]">
                A
              </button>
            </div>
          </aside>

          <section className="min-w-0 flex-1 border-t border-l border-[#77736d]">
            <Drawing />
            <div className="flex h-[11px] items-center">
              {layoutButtons.map((b) => (
                <button key={b.name} aria-label={b.name} className={`flex h-[10px] w-[13px] items-center justify-center ${raised}`}>
                  <svg viewBox="0 0 8 8" className="h-[6px] w-[6px]">
                    <path d={b.d} fill="#000" stroke="#000" />
                  </svg>
                </button>
              ))}
              <div role="tablist" className="flex h-[11px] pl-[2px]">
                <button
                  role="tab"
                  aria-selected="true"
                  className="w-[29px] bg-black text-center text-[9px] leading-[11px] text-white [clip-path:polygon(0_0,100%_0,88%_100%,12%_100%)]"
                >
                  模型
                </button>
                <button role="tab" aria-selected="false" className="flex items-center text-[9px] leading-[11px]">
                  <svg viewBox="0 0 5 11" className="h-[11px] w-[3px]">
                    <path d="M1 11l3-11" stroke="#222" />
                  </svg>
                  布局1
                  <svg viewBox="0 0 5 11" className="h-[11px] w-[5px]">
                    <path d="M4 0L1 11" stroke="#222" />
                  </svg>
                </button>
              </div>
            </div>
          </section>

          <aside className="flex w-[20px] shrink-0 flex-col items-start border-l border-white">
            <div className={`flex w-[19px] flex-col items-center pt-[2px] pb-[2px] ${raised}`}>
              <VGrip />
              <Tools items={modifyTools} />
            </div>
            <div className={`mt-[2px] flex w-[19px] flex-col items-center pt-[2px] pb-[2px] ${raised}`}>
              <VGrip />
              <Tools items={orderTools} />
            </div>
          </aside>
        </div>

        <div className="mt-[3px] h-[2px] border-t border-white bg-[#4e4b47]" />

        <div className="mt-[7px] flex pr-[6px] pl-[3px]">
          <HGrip />
          <div className="ml-[2px] min-w-0 flex-1 border-t border-l border-[#55524e] text-[12px] text-[#333]">
            <div className="flex h-[17px] border-b border-[#b9b5ae]">
              <output className="min-w-0 flex-1 overflow-hidden bg-white pl-[1px] leading-[14px] whitespace-pre">
                <Mixed text="指定另一个角点或 [面积(A)/尺寸(D)/旋转(R)]:" latin="font-['Liberation_Mono',monospace] text-[9px]" />
              </output>
              <div className="flex w-[11px] flex-col">
                <button aria-label="向上滚动" className={`flex flex-1 items-center justify-center ${raised}`}>
                  <svg viewBox="0 0 6 4" className="w-1">
                    <path d="M0 4h6L3 0z" fill="#333" />
                  </svg>
                </button>
                <button aria-label="向下滚动" className={`flex flex-1 items-center justify-center ${raised}`}>
                  <svg viewBox="0 0 6 4" className="w-1">
                    <path d="M0 0h6L3 4z" fill="#333" />
                  </svg>
                </button>
              </div>
            </div>
            <div className="flex h-[13px]">
              <label htmlFor="command" className="bg-white pl-[1px] leading-[13px]">
                命令:
              </label>
              <input id="command" className="min-w-0 flex-1 bg-white outline-none" />
              <div className="flex w-[47px] bg-[#e6e3de]">
                <button aria-label="向左滚动" className={`flex w-3 items-center justify-center bg-[#d6d2cb] ${raised}`}>
                  <svg viewBox="0 0 4 6" className="h-[6px]">
                    <path d="M4 0v6L0 3z" fill="#000" />
                  </svg>
                </button>
                <div className={`w-3 bg-[#d6d2cb] ${raised}`} />
                <div className="flex-1" />
                <button aria-label="向右滚动" className={`flex w-3 items-center justify-center bg-[#d6d2cb] ${raised}`}>
                  <svg viewBox="0 0 4 6" className="h-[6px]">
                    <path d="M0 0v6l4-3z" fill="#000" />
                  </svg>
                </button>
              </div>
              <div className="w-[11px] bg-[#d6d2cb]" />
            </div>
          </div>
        </div>

        <footer className="mt-[3px] flex h-[18px] items-center gap-[1px] border-t border-[#efede9] pl-[2px]">
          <output
            aria-label="坐标"
            className={`mr-[1px] h-[14px] min-w-0 flex-1 overflow-hidden pl-[1px] font-['Liberation_Serif',serif] text-[10px] leading-3 whitespace-nowrap ${sunken}`}
          >
            319606.1446, 51874.0150, 0.0000
          </output>
          {modes.map((m) => (
            <button
              key={m.name}
              aria-pressed={m.on}
              className={`h-[14px] shrink-0 px-[1px] text-[9px] leading-3 whitespace-nowrap ${m.on ? sunken : raised}`}
            >
              <Mixed text={m.name} latin="font-['Liberation_Mono',monospace] text-[8px]" />
            </button>
          ))}
          <button className={`flex h-[14px] w-[5px] shrink-0 justify-center overflow-hidden text-[9px] leading-3 ${sunken}`}>模</button>
          <svg viewBox="0 0 44 14" className="mx-[1px] h-[14px] w-[44px] shrink-0" fill="none">
            <path d="M2 2h8M2 6l8-4M9 1v5" stroke="#3a63a8" strokeWidth="2" />
            <path d="M8 3l6 9H3z" fill="#f2c824" stroke="#8f7411" />
            <path d="M8 6v3M8 10v1" stroke="#222" />
            <path d="M23 6V4c0-3 5-3 5 0v3" stroke="#6e5b14" strokeWidth="1.500" />
            <path d="M17 5h7v7h-7z" fill="#d9a916" stroke="#5d4709" />
            <path d="M31 2h7v9h-7z" fill="#7fb1dd" stroke="#2a5a8c" />
            <circle cx="39" cy="9" r="4" fill="#39a845" />
            <path d="M37 9l2 2 3-4" stroke="#fff" strokeWidth="1.300" />
          </svg>
          <button aria-label="状态行菜单" className="flex w-[14px] shrink-0 items-center justify-center">
            <svg viewBox="0 0 6 4" className="w-[5px]">
              <path d="M0 0h6L3 4z" fill="#000" />
            </svg>
          </button>
          <button aria-label="全屏显示" className="h-3 w-3 shrink-0 border border-[#3d70aa] bg-[linear-gradient(135deg,#dcebfa,#6ea3d8)]" />
          <svg viewBox="0 0 9 9" className="mt-[6px] ml-[2px] h-[9px] w-[9px] shrink-0">
            <path d="M0 9l9-9M3 9l6-6M6 9l3-3" stroke="#8c8882" />
          </svg>
        </footer>
      </main>

      <div className="flex h-[84px] items-center justify-end bg-[linear-gradient(to_bottom,#5f5e5c_0%,#807f7d_8%,#a5a4a2_25%,#c6c6c3_50%,#cfcfcc_65%,#c0bfbd_85%,#adacaa_100%)] pr-[28px]">
        <a href="https://jingyan.baidu.com" className="mt-[20px] flex flex-col text-white/85">
          <span className="flex h-[29px] items-end">
            <span className="text-[20px] leading-[24px] font-bold">Bai</span>
            <svg viewBox="0 0 26 29" className="h-[29px] w-[26px]">
              <g fill="currentColor">
                <ellipse cx="4" cy="12" rx="3" ry="4" />
                <ellipse cx="10" cy="5" rx="3" ry="4" />
                <ellipse cx="17" cy="5" rx="3" ry="4" />
                <ellipse cx="23" cy="12" rx="3" ry="4" />
                <path d="M13 11c4 0 5 4 8 7s3 10-3 10H7c-6 0-6-7-2-10s4-7 8-7z" />
              </g>
              <text x="13" y="25" textAnchor="middle" fill="#b3b2b0" className="text-[12px] font-bold">
                du
              </text>
            </svg>
            <span className="pl-[1px] text-[16px] leading-[22px] font-medium">经验</span>
          </span>
          <span className="font-['Noto_Sans',sans-serif] text-[10px] leading-[14px]">jingyan.baidu.com</span>
        </a>
      </div>
    </div>
  );
}
